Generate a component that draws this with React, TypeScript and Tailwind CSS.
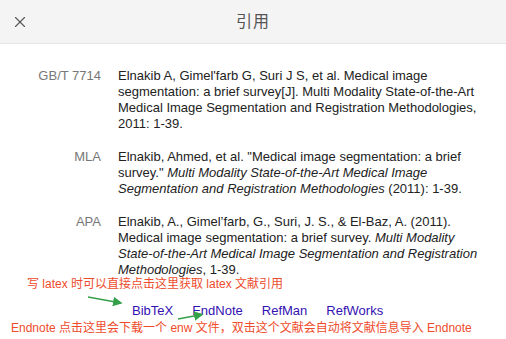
import { X } from 'lucide-react'

const font = { fontFamily: '"Liberation Sans", "Noto Sans CJK SC", sans-serif' }

type Cite = { label: string; body: React.ReactNode }

const cites: Cite[] = [
  {
    label: 'GB/T 7714',
    body: (
      <>
        Elnakib A, Gimel'farb G, Suri J S, et al. Medical image segmentation: a brief survey[J]. Multi
        Modality State-of-the-Art Medical Image Segmentation and Registration Methodologies, 2011: 1-39.
      </>
    ),
  },
  {
    label: 'MLA',
    body: (
      <>
        Elnakib, Ahmed, et al. "Medical image segmentation: a brief survey."{' '}
        <i>Multi Modality State-of-the-Art Medical Image Segmentation and Registration Methodologies</i>{' '}
        (2011): 1-39.
      </>
    ),
  },
  {
    label: 'APA',
    body: (
      <>
        Elnakib, A., Gimel’farb, G., Suri, J. S., &amp; El-Baz, A. (2011). Medical image segmentation: a
        brief survey.{' '}
        <i>Multi Modality State-of-the-Art Medical Image Segmentation and Registration Methodologies</i>,
        1-39.
      </>
    ),
  },
]

export default function App() {
  return (
    <div className="w-[506px] h-[339px] bg-white overflow-hidden relative" style={font}>
      {/* Header */}
      <div className="h-[44px] bg-[#f4f4f4] border-b border-[#e3e3e3] flex items-center relative">
        <X className="ml-[11px] w-[18px] h-[18px] text-[#555]" strokeWidth={1.5} />
        <div className="absolute left-0 right-0 text-center text-[16px] text-[#555] tracking-[1px]">引用</div>
      </div>

      {/* Citations */}
      <div className="pt-[24px] pr-[22px] flex flex-col gap-[17px]">
        {cites.map((c) => (
          <div key={c.label} className="flex text-[13px] leading-[16px]">
            <div className="w-[101px] shrink-0 text-right text-[#777]">{c.label}</div>
            <div className="pl-[17px] text-[#222]">{c.body}</div>
          </div>
        ))}
      </div>

      {/* Annotations */}
      <div className="relative">
        <div className="pl-[27px] mt-[-1px] text-[12px] leading-[14px] text-[#ee4b2b]">
          写 latex 时可以直接点击这里获取 latex 文献引用
        </div>
        <div className="pl-[132px] mt-[12px] flex gap-[19px] text-[13px] leading-[16px] text-[#3411b2]">
          <span>BibTeX</span>
          <span>EndNote</span>
          <span>RefMan</span>
          <span>RefWorks</span>
        </div>
        <div className="pl-[11px] mt-[2px] text-[12px] leading-[14px] text-[#ee4b2b]">
          Endnote 点击这里会下载一个 enw 文件，双击这个文献会自动将文献信息导入 Endnote
        </div>
      </div>

      {/* green arrows */}
      <svg className="absolute left-0 top-0 pointer-events-none" width="506" height="339">
        <defs>
          <marker id="ah" markerWidth="6" markerHeight="6" refX="5" refY="3" orient="auto">
            <path d="M0 0 L6 3 L0 6 Z" fill="#35a04a" />
          </marker>
        </defs>
        <line x1="88" y1="297" x2="121" y2="303" stroke="#35a04a" strokeWidth="1.6" markerEnd="url(#ah)" />
        <line x1="178" y1="319" x2="202" y2="314.5" stroke="#35a04a" strokeWidth="1.6" markerEnd="url(#ah)" />
      </svg>
    </div>
  )
}
